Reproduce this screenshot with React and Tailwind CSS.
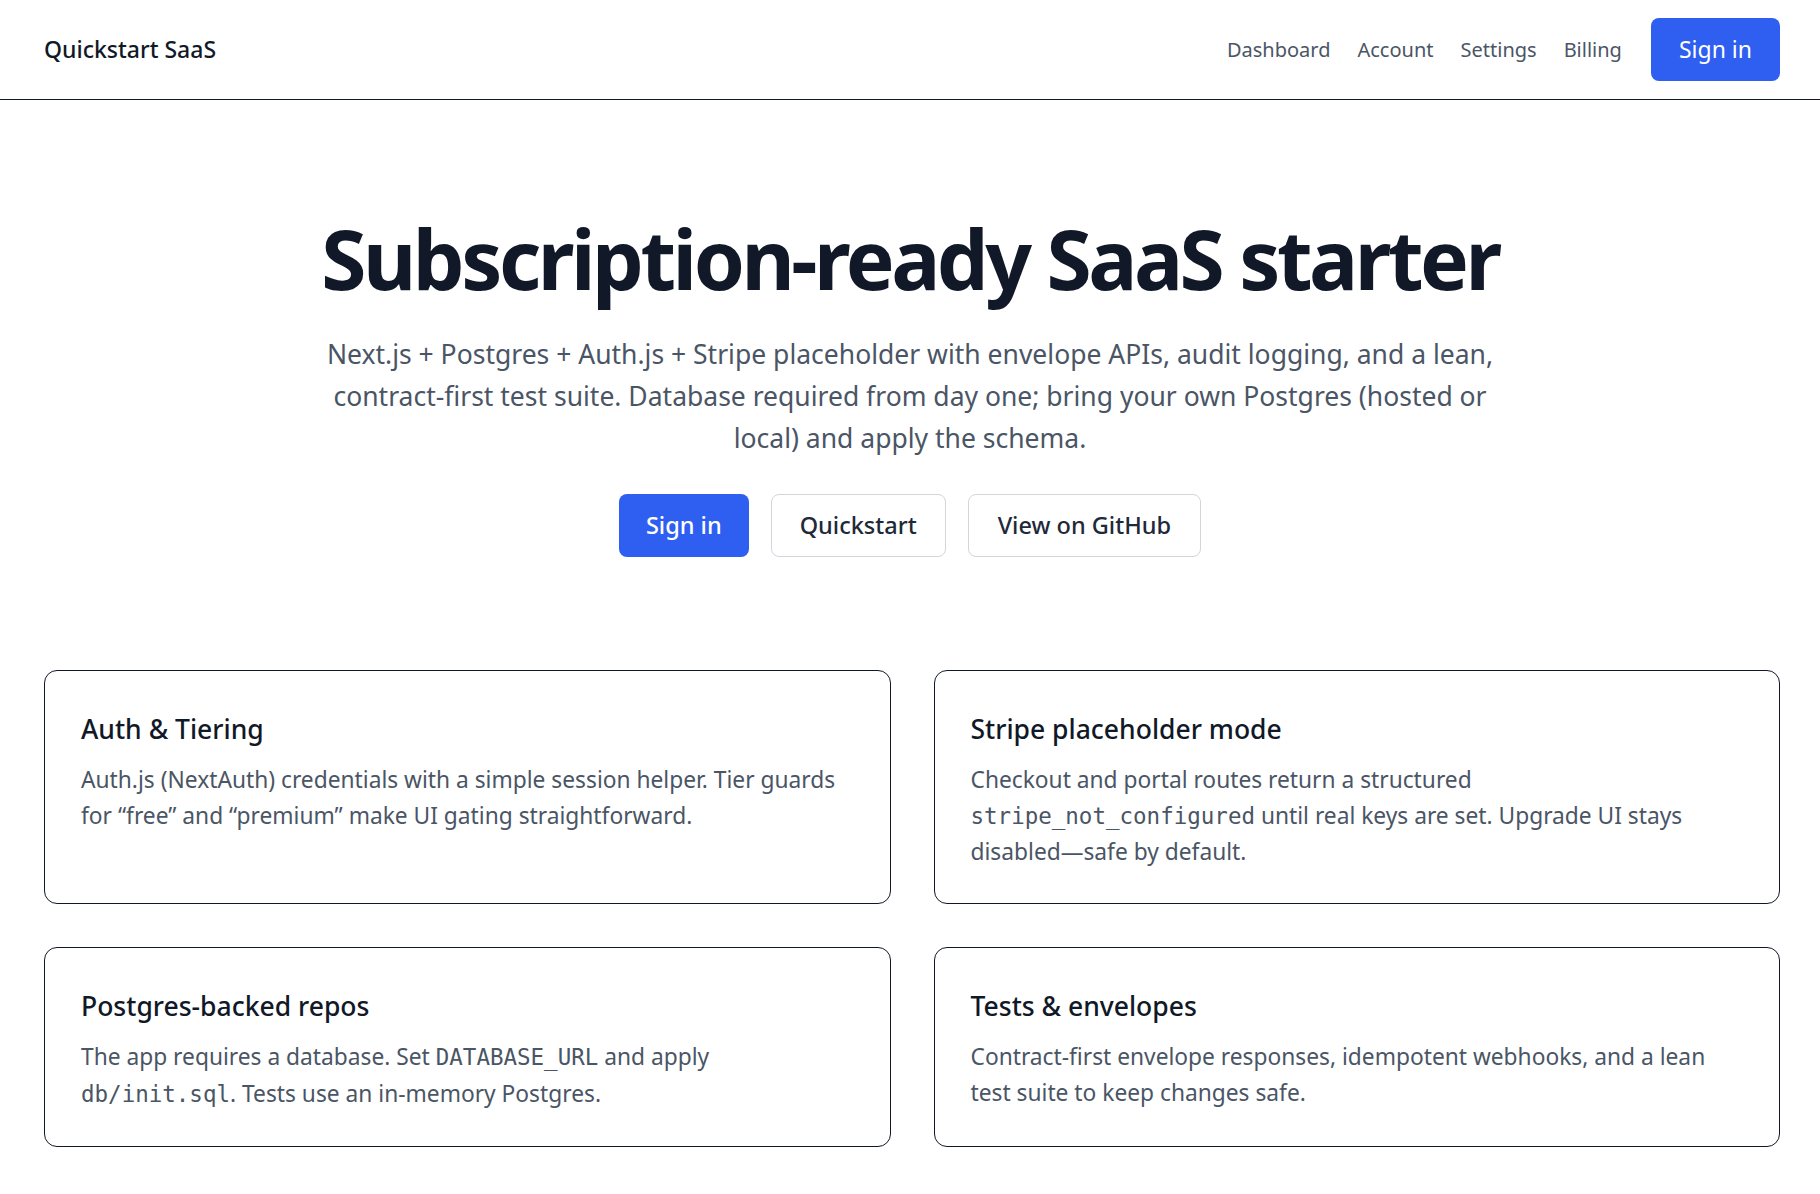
import React from "react";

const navItems = ["Dashboard", "Account", "Settings", "Billing"];

const Mono = ({ children }) => (
  <code className="font-['DejaVu_Sans_Mono','Liberation_Mono',monospace] text-[22.5px]">{children}</code>
);

const features = [
  {
    title: "Auth & Tiering",
    body: (
      <>Auth.js (NextAuth) credentials with a simple session helper. Tier guards for “free” and “premium” make UI gating straightforward.</>
    ),
  },
  {
    title: "Stripe placeholder mode",
    body: (
      <>
        Checkout and portal routes return a structured <Mono>stripe_not_configured</Mono> until real keys are set. Upgrade UI stays
        disabled—safe by default.
      </>
    ),
  },
  {
    title: "Postgres-backed repos",
    body: (
      <>
        The app requires a database. Set <Mono>DATABASE_URL</Mono> and apply <Mono>db/init.sql</Mono>. Tests use an in-memory Postgres.
      </>
    ),
  },
  {
    title: "Tests & envelopes",
    body: <>Contract-first envelope responses, idempotent webhooks, and a lean test suite to keep changes safe.</>,
  },
];

export default function App() {
  return (
    <div className="min-h-screen bg-white font-['Noto_Sans','Open_Sans',sans-serif] text-gray-900">
      {/* Header */}
      <header className="h-[100px] border-b border-[#111827] pl-[44px] pr-[40px] flex items-center justify-between">
        <span className="text-[23px] font-medium text-[#111827]">Quickstart SaaS</span>
        <nav className="flex items-center">
          <div className="flex items-center gap-[27px] text-[20px] text-gray-600">
            {navItems.map((item) => (
              <a key={item} href="#" className="hover:text-gray-900">
                {item}
              </a>
            ))}
          </div>
          <button className="ml-[29px] h-[63px] px-[28px] rounded-[8px] bg-[#2f5ff0] text-white text-[23px]">Sign in</button>
        </nav>
      </header>

      {/* Hero */}
      <section className="pt-[113px] flex flex-col items-center text-center">
        <h1 className="text-[82px] leading-[1.1] font-bold tracking-[-0.042em] text-[#111827]">
          Subscription-ready SaaS starter
        </h1>
        <p className="mt-[30px] max-w-[1190px] text-[26.5px] leading-[42px] text-gray-600">
          Next.js + Postgres + Auth.js + Stripe placeholder with envelope APIs, audit logging, and a lean, contract-first test suite.
          Database required from day one; bring your own Postgres (hosted or local) and apply the schema.
        </p>
        <div className="mt-[35px] flex items-center gap-[22px]">
          <button className="h-[63px] px-[27px] rounded-[8px] bg-[#2f5ff0] text-white text-[23.5px] font-medium">Sign in</button>
          <button className="h-[63px] px-[28px] rounded-[8px] border border-gray-300 bg-white text-gray-800 text-[23.5px] font-medium">
            Quickstart
          </button>
          <button className="h-[63px] px-[29px] rounded-[8px] border border-gray-300 bg-white text-gray-800 text-[23.5px] font-medium">
            View on GitHub
          </button>
        </div>
      </section>

      {/* Features */}
      <section className="mt-[113px] pl-[44px] pr-[40px] pb-[40px] grid grid-cols-2 gap-[43px]">
        {features.map((f) => (
          <div key={f.title} className="rounded-[13px] border border-[#111827] px-[36px] pt-[40px] pb-[34px]">
            <h3 className="text-[26.5px] leading-[36px] font-medium text-[#111827]">{f.title}</h3>
            <p className="mt-[15px] text-[22.75px] leading-[35.4px] text-gray-600">{f.body}</p>
          </div>
        ))}
      </section>
    </div>
  );
}
